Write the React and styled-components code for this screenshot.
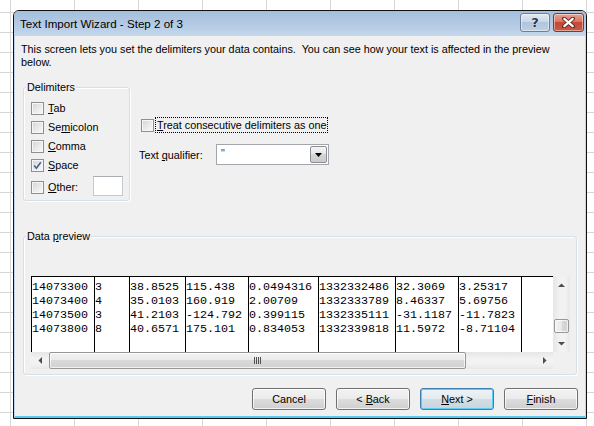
import React from 'react';
import styled, { createGlobalStyle } from 'styled-components';

const GlobalStyle = createGlobalStyle`
  html, body { margin: 0; padding: 0; }
  body {
    width: 594px;
    height: 426px;
    overflow: hidden;
    background-color: #fff;
    background-image:
      linear-gradient(to right, #d6d6d6 1px, transparent 1px),
      linear-gradient(to bottom, #d6d6d6 1px, transparent 1px);
    background-size: 64px 20px;
    background-position: 10px 12px;
    font-family: "Liberation Sans", Arial, sans-serif;
    font-size: 10.8px;
    color: #000;
  }
`;

const Desktop = styled.div`
  padding: 10px 0 0 13px;
`;

const Dialog = styled.div`
  box-sizing: border-box;
  width: 574px;
  height: 409px;
  border: 1px solid #101010;
  border-radius: 6px 6px 0 0;
  background: #f0f0f0;
  display: flex;
  flex-direction: column;
  overflow: hidden;
`;

const TitleBar = styled.div`
  height: 25px;
  flex: none;
  display: flex;
  justify-content: space-between;
  padding: 0 2px 0 6px;
  background: linear-gradient(#a4bedc, #b6cce5 60%, #c4d7ec);
`;

const Title = styled.span`
  align-self: center;
  font-size: 11.6px;
  color: #000;
`;

const CaptionButtons = styled.div`
  display: flex;
  gap: 3px;
  padding-top: 2px;
`;

const CaptionButton = styled.div`
  box-sizing: border-box;
  width: ${p => p.$w}px;
  height: 19px;
  border: 1px solid ${p => (p.$close ? '#7a3a33' : '#6d7f95')};
  border-radius: 3px;
  display: flex;
  align-items: center;
  justify-content: center;
  background: ${p =>
    p.$close
      ? 'linear-gradient(#e8a395, #d8765f 45%, #c44a33 50%, #c85a45)'
      : 'linear-gradient(#dfe8f2, #c9d8e8 45%, #b0c6dd 50%, #bdd0e4)'};
  box-shadow: inset 0 0 0 1px rgba(255, 255, 255, 0.45);
`;

const HelpGlyph = styled.span`
  font-family: "DejaVu Sans", sans-serif;
  font-weight: bold;
  font-size: 13px;
  line-height: 1;
  color: #2c3440;
  text-shadow: 0 0 1px #fff, 0 0 1px #fff;
`;

const Body = styled.div`
  flex: 1;
  display: flex;
  flex-direction: column;
  border-left: 1px solid #c1d6ec;
  border-right: 1px solid #c1d6ec;
  border-bottom: 2px solid #58cbee;
  padding: 0 7px 0 8px;
`;

const Intro = styled.p`
  margin: 7px 0 0 -2px;
  line-height: 13px;
  white-space: nowrap;
`;

const OptionsRow = styled.div`
  display: flex;
  align-items: flex-start;
  margin-top: 18px;
`;

const GroupBox = styled.div`
  position: relative;
  box-sizing: border-box;
  width: ${p => p.$w}px;
  height: ${p => p.$h}px;
  border: 1px solid #d5dfe5;
  border-radius: 3px;
  box-shadow: inset 1px 1px 0 #fff, 1px 1px 0 #fff;
  padding: ${p => p.$pad};
  display: flex;
  flex-direction: column;
`;

const GroupLabel = styled.span`
  position: absolute;
  top: -8px;
  left: 2px;
  padding: 0 1px;
  line-height: 14px;
  background: #f0f0f0;
`;

const CheckRow = styled.label`
  display: flex;
  align-items: ${p => (p.$top ? 'flex-start' : 'center')};
  height: ${p => p.$h || 13}px;
  margin-bottom: ${p => p.$mb ?? 6}px;
  line-height: 13px;
`;

const Box = styled.span`
  box-sizing: border-box;
  width: 13px;
  height: 13px;
  flex: none;
  margin-top: ${p => p.$mt || 0}px;
  border: 1px solid #8e8f8f;
  background: linear-gradient(135deg, #d2d4d7 0%, #e9eaeb 55%, #fafafa 100%);
  box-shadow: inset 0 0 0 1px #f6f6f6;
  display: flex;
  align-items: center;
  justify-content: center;
`;

const CheckText = styled.span`
  margin-left: ${p => p.$ml ?? 4}px;
  margin-top: ${p => p.$mt || 0}px;
`;

const SmallInput = styled.div`
  box-sizing: border-box;
  width: 30px;
  height: 20px;
  margin-left: auto;
  background: #fff;
  border: 1px solid #c5cad1;
  border-top-color: #abadb3;
`;

const RightColumn = styled.div`
  display: flex;
  flex-direction: column;
  margin: 30px 0 0 9px;
`;

const TreatRow = styled.label`
  display: flex;
  align-items: center;
  margin-left: 2px;
`;

const FocusText = styled.span`
  margin-left: 1px;
  padding: 0 1px;
  line-height: 14px;
  border: 1px dotted #000;
`;

const QualifierRow = styled.div`
  display: flex;
  align-items: center;
  margin-top: 11px;
`;

const QualifierLabel = styled.span`
  width: 77px;
`;

const Combo = styled.div`
  box-sizing: border-box;
  width: 113px;
  height: 21px;
  background: #fff;
  border: 1px solid #a3a6ad;
  display: flex;
  align-items: stretch;
  padding: 1px;
`;

const ComboValue = styled.span`
  flex: 1;
  padding-left: 3px;
  line-height: 14px;
  color: #4a3a2a;
`;

const ComboButton = styled.div`
  box-sizing: border-box;
  width: 17px;
  border: 1px solid #8c8f94;
  border-radius: 2px;
  background: linear-gradient(#f4f4f4, #e6e6e6 50%, #d6d6d6 50%, #cacaca);
  display: flex;
  align-items: center;
  justify-content: center;
`;

const PreviewFrame = styled.div`
  display: grid;
  grid-template-columns: 522px 17px;
  grid-template-rows: 76px 17px;
`;

const DataArea = styled.div`
  display: flex;
  background: #fff;
  border-top: 1px solid #000;
  overflow: hidden;
`;

const DataColumn = styled.div`
  box-sizing: border-box;
  flex: none;
  width: ${p => p.$w}px;
  border-left: 1px solid #000;
  padding-top: 3px;
  font-family: "Liberation Mono", "Courier New", monospace;
  font-size: 11.7px;
  line-height: 14px;
  white-space: pre;
  overflow: hidden;
`;

const VScroll = styled.div`
  display: flex;
  flex-direction: column;
  background: linear-gradient(to right, #e6e6e6, #f2f2f2 40%, #f2f2f2 70%, #e8e8e8);
`;

const HScroll = styled.div`
  display: flex;
  background: linear-gradient(#e6e6e6, #f2f2f2 40%, #f2f2f2 70%, #e8e8e8);
`;

const ArrowCell = styled.div`
  width: 17px;
  height: 17px;
  flex: none;
  display: flex;
  align-items: center;
  justify-content: center;
`;

const VTrack = styled.div`
  flex: 1;
  display: flex;
  flex-direction: column;
  justify-content: flex-end;
  padding: 0 1px 2px;
`;

const HTrack = styled.div`
  flex: 1;
  display: flex;
  padding: 0 0 0 1px;
`;

const Thumb = styled.div`
  box-sizing: border-box;
  width: ${p => (p.$vertical ? '15px' : `${p.$len}px`)};
  height: ${p => (p.$vertical ? `${p.$len}px` : '17px')};
  border: 1px solid #979797;
  border-radius: 2px;
  background: ${p =>
    p.$vertical
      ? 'linear-gradient(to right, #f3f3f3, #e9e9e9 50%, #d9d9d9 50%, #d2d2d2)'
      : 'linear-gradient(#f3f3f3, #e9e9e9 50%, #d9d9d9 50%, #d2d2d2)'};
  box-shadow: inset 0 0 0 1px rgba(255, 255, 255, 0.7);
  display: flex;
  align-items: center;
  justify-content: center;
`;

const Corner = styled.div`
  background: #f0f0f0;
`;

const ButtonRow = styled.div`
  display: flex;
  justify-content: flex-end;
  gap: 10px;
  margin-top: 13px;
`;

const Button = styled.button`
  box-sizing: border-box;
  width: 74px;
  height: 22px;
  padding: 0;
  font: inherit;
  color: #000;
  border: 1px solid ${p => (p.$default ? '#3c7fb1' : '#707070')};
  border-radius: 3px;
  background: ${p =>
    p.$default
      ? 'linear-gradient(#eef3f6, #e3ebf0 50%, #d3dde4 50%, #c9d5dd)'
      : 'linear-gradient(#f2f2f2, #ebebeb 50%, #dddddd 50%, #cfcfcf)'};
  box-shadow: ${p =>
    p.$default ? 'inset 0 0 0 1px #5fcdf3' : 'inset 0 0 0 1px rgba(255, 255, 255, 0.75)'};
`;

const rows = [
  ['14073300', '3', '38.8525', '115.438', '0.0494316', '1332332486', '32.3069', '3.25317', ''],
  ['14073400', '4', '35.0103', '160.919', '2.00709', '1332333789', '8.46337', '5.69756', ''],
  ['14073500', '3', '41.2103', '-124.792', '0.399115', '1332335111', '-31.1187', '-11.7823', ''],
  ['14073800', '8', '40.6571', '175.101', '0.834053', '1332339818', '11.5972', '-8.71104', ''],
];

const widths = [63, 35, 56, 63, 70, 77, 63, 63, 32];

function Check({ checked, mt }) {
  return (
    <Box $mt={mt}>
      {checked && (
        <svg width="9" height="9" viewBox="0 0 9 9">
          <path d="M1.2 4.6 L3.4 7.2 L7.8 1.2" stroke="#4b5f93" strokeWidth="1.6" fill="none" />
        </svg>
      )}
    </Box>
  );
}

function Triangle({ dir }) {
  const pts = {
    up: '0,4 3.5,0.5 7,4',
    down: '0,0 3.5,3.5 7,0',
    left: '4,0 0.5,3.5 4,7',
    right: '0,0 3.5,3.5 0,7',
  }[dir];
  const w = dir === 'up' || dir === 'down' ? 7 : 4;
  const h = dir === 'up' || dir === 'down' ? 4 : 7;
  return (
    <svg width={w} height={h} viewBox={`0 0 ${w} ${h}`}>
      <polygon points={pts} fill="#4d4d4d" />
    </svg>
  );
}

function Grip() {
  return (
    <svg width="8" height="7" viewBox="0 0 8 7">
      {[0, 2, 4, 6].map(x => (
        <g key={x}>
          <rect x={x} y="0" width="1" height="7" fill="#4e4e4e" />
        </g>
      ))}
    </svg>
  );
}

export default function App() {
  return (
    <>
      <GlobalStyle />
      <Desktop>
        <Dialog>
          <TitleBar>
            <Title>Text Import Wizard - Step 2 of 3</Title>
            <CaptionButtons>
              <CaptionButton $w={30}>
                <HelpGlyph>?</HelpGlyph>
              </CaptionButton>
              <CaptionButton $w={31} $close>
                <svg width="13" height="11" viewBox="0 0 13 11">
                  <path d="M2 1.5 L11 9.5 M11 1.5 L2 9.5" stroke="#5b2a24" strokeWidth="4" strokeLinecap="round" />
                  <path d="M2.3 1.8 L10.7 9.2 M10.7 1.8 L2.3 9.2" stroke="#fff" strokeWidth="2.2" strokeLinecap="round" />
                </svg>
              </CaptionButton>
            </CaptionButtons>
          </TitleBar>

          <Body>
            <Intro>
              This screen lets you set the delimiters your data contains.&nbsp; You can see how your text is affected in the preview
              <br />
              below.
            </Intro>

            <OptionsRow>
              <GroupBox $w={107} $h={114} $pad="14px 6px 0 7px">
                <GroupLabel>Delimiters</GroupLabel>
                <CheckRow>
                  <Check />
                  <CheckText><u>T</u>ab</CheckText>
                </CheckRow>
                <CheckRow>
                  <Check />
                  <CheckText>Se<u>m</u>icolon</CheckText>
                </CheckRow>
                <CheckRow>
                  <Check />
                  <CheckText><u>C</u>omma</CheckText>
                </CheckRow>
                <CheckRow $mb={4}>
                  <Check checked />
                  <CheckText><u>S</u>pace</CheckText>
                </CheckRow>
                <CheckRow $top $h={20} $mb={0}>
                  <Check mt={5} />
                  <CheckText $mt={5}><u>O</u>ther:</CheckText>
                  <SmallInput />
                </CheckRow>
              </GroupBox>

              <RightColumn>
                <TreatRow>
                  <Check />
                  <FocusText><u>T</u>reat consecutive delimiters as one</FocusText>
                </TreatRow>
                <QualifierRow>
                  <QualifierLabel>Text <u>q</u>ualifier:</QualifierLabel>
                  <Combo>
                    <ComboValue>"</ComboValue>
                    <ComboButton>
                      <svg width="7" height="4" viewBox="0 0 7 4">
                        <polygon points="0,0 3.5,4 7,0" fill="#000" />
                      </svg>
                    </ComboButton>
                  </Combo>
                </QualifierRow>
              </RightColumn>
            </OptionsRow>

            <GroupBox $w={554} $h={139} $pad="39px 0 0 7px" style={{ marginTop: 35 }}>
              <GroupLabel>Data <u>p</u>review</GroupLabel>
              <PreviewFrame>
                <DataArea>
                  {widths.map((w, c) => (
                    <DataColumn key={c} $w={w}>
                      {rows.map(r => r[c]).join('\n')}
                    </DataColumn>
                  ))}
                </DataArea>
                <VScroll>
                  <ArrowCell><Triangle dir="up" /></ArrowCell>
                  <VTrack>
                    <Thumb $vertical $len={14} />
                  </VTrack>
                  <ArrowCell><Triangle dir="down" /></ArrowCell>
                </VScroll>
                <HScroll>
                  <ArrowCell><Triangle dir="left" /></ArrowCell>
                  <HTrack>
                    <Thumb $len={417}>
                      <Grip />
                    </Thumb>
                  </HTrack>
                  <ArrowCell><Triangle dir="right" /></ArrowCell>
                </HScroll>
                <Corner />
              </PreviewFrame>
            </GroupBox>

            <ButtonRow>
              <Button>Cancel</Button>
              <Button>&lt; <u>B</u>ack</Button>
              <Button $default><u>N</u>ext &gt;</Button>
              <Button><u>F</u>inish</Button>
            </ButtonRow>
          </Body>
        </Dialog>
      </Desktop>
    </>
  );
}
